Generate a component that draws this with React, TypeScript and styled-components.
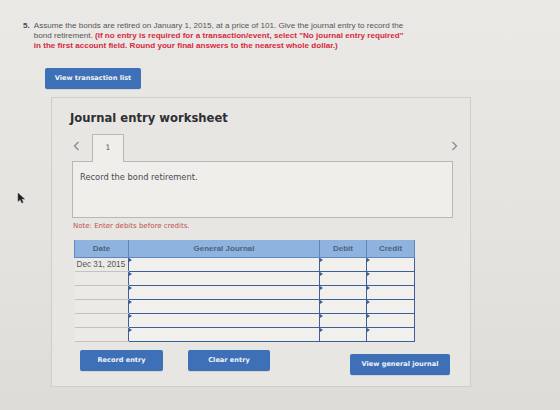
import React from 'react'
import styled, { createGlobalStyle } from 'styled-components'

const GlobalStyle = createGlobalStyle`
  html, body {
    margin: 0;
    padding: 0;
  }
  body {
    width: 560px;
    height: 410px;
    overflow: hidden;
    background: linear-gradient(180deg, #eae9e6 0%, #e4e3df 55%, #dddcd6 100%);
    font-family: "Liberation Sans", Arial, sans-serif;
  }
`

const Page = styled.div`
  position: relative;
  width: 560px;
  height: 410px;
  padding: 21px 0 0 23px;
  box-sizing: border-box;
`

const Question = styled.div`
  display: flex;
  gap: 4px;
  font-size: 8.1px;
  line-height: 10px;
  color: #55555a;
`

const Num = styled.span`
  font-weight: bold;
  color: #4a4a55;
`

const Warn = styled.span`
  color: #d7283f;
  font-weight: bold;
`

const BlueButton = styled.button<{ $w: number }>`
  all: unset;
  box-sizing: border-box;
  width: ${p => p.$w}px;
  height: 21px;
  background: #3d70b6;
  border-radius: 2px;
  color: #f2f4f8;
  font-family: "DejaVu Sans", Verdana, sans-serif;
  font-weight: bold;
  font-size: 6.6px;
  text-align: center;
  line-height: 19px;
  box-shadow: 0 1px 0 rgba(0, 0, 0, 0.08);
`

const TopAction = styled.div`
  margin: 15px 0 8px 22px;
`

const Panel = styled.div`
  width: 420px;
  margin-left: 28px;
  box-sizing: border-box;
  border: 1px solid #cfcecb;
  background: #e7e6e2;
  padding: 13px 17px 11px 20px;
`

const Title = styled.h2`
  margin: 0 0 8px -2px;
  font-family: "DejaVu Sans", Verdana, sans-serif;
  font-size: 11.6px;
  font-weight: bold;
  color: #2f2f33;
`

const TabRow = styled.div`
  display: flex;
  align-items: flex-end;
  height: 28px;
  margin-left: 2px;
`

const Chevron = styled.svg<{ $side: 'left' | 'right' }>`
  align-self: center;
  margin-top: -3px;
  margin-left: ${p => (p.$side === 'left' ? '-1px' : '0')};
  margin-right: ${p => (p.$side === 'left' ? '12px' : '-5px')};
  flex: none;
`

const Tab = styled.div`
  width: 32px;
  height: 28px;
  box-sizing: border-box;
  border: 1px solid #b9b8b5;
  border-bottom: none;
  background: #efeeeb;
  font-family: "DejaVu Sans", sans-serif;
  font-size: 7.5px;
  color: #55555a;
  text-align: center;
  padding-top: 8px;
  position: relative;
  top: 1px;
`

const Spacer = styled.div`
  flex: 1;
`

const TaskBox = styled.div`
  height: 57px;
  box-sizing: border-box;
  border: 1px solid #b9b8b5;
  background: #efeeeb;
  padding: 10px 7px;
  font-family: "DejaVu Sans", sans-serif;
  font-size: 8.3px;
  color: #4a4a50;
`

const Note = styled.div`
  margin: 4px 0 10px 1px;
  font-family: "DejaVu Sans", sans-serif;
  font-size: 7px;
  color: #c2504f;
`

const Grid = styled.table`
  border-collapse: collapse;
  margin-left: 2px;
  font-family: "Liberation Sans", Arial, sans-serif;
`

const Head = styled.th<{ $w: number }>`
  width: ${p => p.$w}px;
  height: 17px;
  padding: 0;
  background: #8db3de;
  border: 1px solid #5f86bd;
  border-top: none;
  color: #4d627e;
  font-size: 8px;
  font-weight: bold;
  text-align: center;
`

const DateCell = styled.td`
  height: 13px;
  padding: 0 0 0 2px;
  background: #ebeae6;
  border-bottom: 1px solid #c3c2bf;
  font-size: 8.2px;
  color: #55555a;
  white-space: nowrap;
`

const InputCell = styled.td`
  position: relative;
  height: 13px;
  padding: 0;
  background: #f1f0ed;
  border: 1.5px solid #3c5f9a;

  &::before {
    content: '';
    position: absolute;
    left: 0;
    top: 0;
    border-left: 3px solid #3c5f9a;
    border-top: 2px solid transparent;
    border-bottom: 2px solid transparent;
  }
`

const Actions = styled.div`
  display: flex;
  align-items: flex-start;
  margin: 8px 0 0 8px;
`

const Cursor = styled.svg`
  position: absolute;
  left: 17px;
  top: 192px;
`

const rows = ['Dec 31, 2015', '', '', '', '', '']

export default function App() {
  return (
    <>
      <GlobalStyle />
      <Page>
        <Question>
          <Num>5.</Num>
          <div>
            Assume the bonds are retired on January 1, 2015, at a price of 101. Give the journal entry to record the
            <br />
            bond retirement. <Warn>(If no entry is required for a transaction/event, select "No journal entry required"</Warn>
            <br />
            <Warn>in the first account field. Round your final answers to the nearest whole dollar.)</Warn>
          </div>
        </Question>

        <TopAction>
          <BlueButton $w={96}>View transaction list</BlueButton>
        </TopAction>

        <Panel>
          <Title>Journal entry worksheet</Title>
          <TabRow>
            <Chevron $side="left" width="7" height="10" viewBox="0 0 7 10">
              <polyline points="5.5,1 1.5,5 5.5,9" fill="none" stroke="#8a8a8e" strokeWidth="1.3" />
            </Chevron>
            <Tab>1</Tab>
            <Spacer />
            <Chevron $side="right" width="7" height="10" viewBox="0 0 7 10">
              <polyline points="1.5,1 5.5,5 1.5,9" fill="none" stroke="#8a8a8e" strokeWidth="1.3" />
            </Chevron>
          </TabRow>
          <TaskBox>Record the bond retirement.</TaskBox>
          <Note>Note: Enter debits before credits.</Note>

          <Grid>
            <thead>
              <tr>
                <Head $w={53}>Date</Head>
                <Head $w={190}>General Journal</Head>
                <Head $w={46}>Debit</Head>
                <Head $w={47}>Credit</Head>
              </tr>
            </thead>
            <tbody>
              {rows.map((d, i) => (
                <tr key={i}>
                  <DateCell>{d}</DateCell>
                  <InputCell />
                  <InputCell />
                  <InputCell />
                </tr>
              ))}
            </tbody>
          </Grid>

          <Actions>
            <BlueButton $w={83}>Record entry</BlueButton>
            <BlueButton $w={82} style={{ marginLeft: 25 }}>Clear entry</BlueButton>
            <Spacer />
            <BlueButton $w={100} style={{ marginRight: 3, marginTop: 4 }}>View general journal</BlueButton>
          </Actions>
        </Panel>

        <Cursor width="9" height="12" viewBox="0 0 9 12">
          <path d="M1 1 L1 9.5 L3.2 7.6 L4.8 11 L6.2 10.4 L4.7 7.1 L7.6 7.1 Z" fill="#1e1e1e" stroke="#555" strokeWidth="0.5" />
        </Cursor>
      </Page>
    </>
  )
}
